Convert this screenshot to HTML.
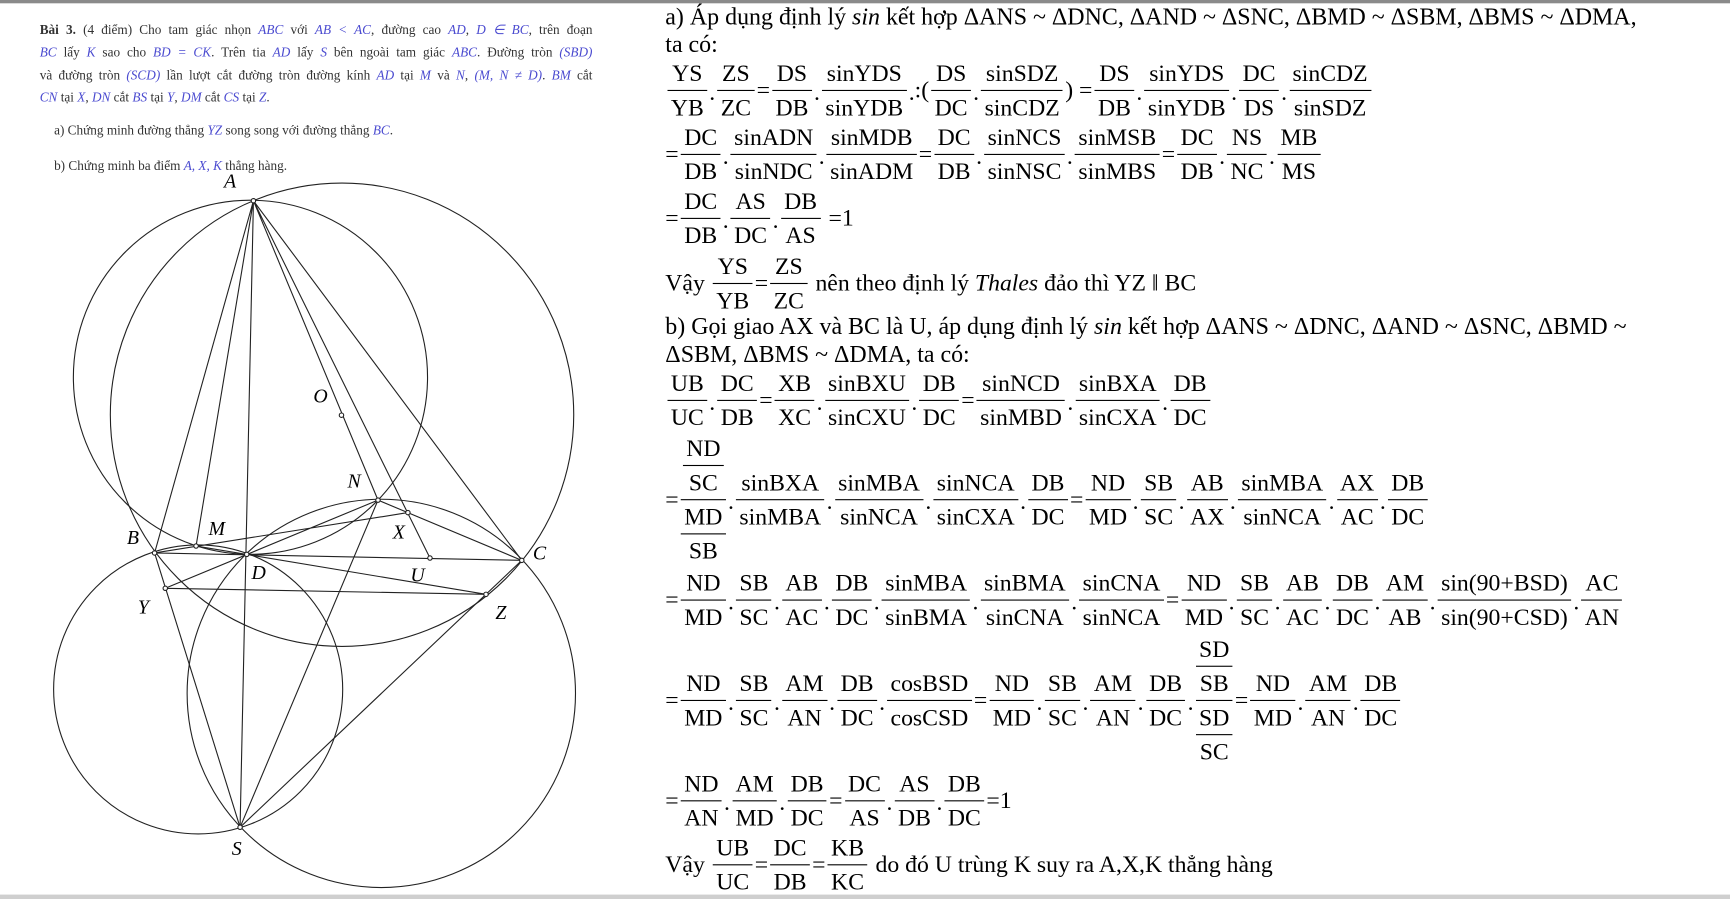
<!DOCTYPE html>
<html><head><meta charset="utf-8"><style>
html,body{margin:0;padding:0;background:#fff;overflow:hidden}
#w{position:absolute;left:0;top:0;width:1568px;height:815px;transform-origin:0 0;transform:scale(1.10332,1.10307);font-family:"Liberation Serif",serif;color:#000}
.tl{position:absolute;left:603px;font-size:21.7px;line-height:24px;white-space:nowrap}
.r{position:absolute;left:603px;display:flex;align-items:center;transform:translateY(-50%);font-size:21.5px;white-space:nowrap}
.f{display:inline-flex;flex-direction:column;text-align:center;margin:0 2px}
.f>span,.f>div{line-height:30px;padding:0 3px}
.f>*+*{border-top:1.5px solid #000}
.f>div{padding:0}
.d{padding:0 0 0 0;position:relative;top:2px}
.p{font-size:12px;color:#333;position:absolute;left:36px;width:501px;white-space:nowrap;line-height:14px}
.j{text-align:justify;text-align-last:justify;white-space:normal}
.m{color:#4b4bd0;font-style:italic}
.lab{position:absolute;font-style:italic;font-size:18px}
</style></head><body><div id="w">
<div style="position:absolute;left:0;top:0;width:1568px;height:3px;background:#8a8a8a"></div>
<div style="position:absolute;left:0;top:811px;width:1568px;height:4px;background:#cfcfcf"></div>

<div class="p j" style="top:20px"><b>Bài 3.</b> (4 điểm) Cho tam giác nhọn <span class="m">ABC</span> với <span class="m">AB &lt; AC</span>, đường cao <span class="m">AD</span>, <span class="m">D ∈ BC</span>, trên đoạn</div>
<div class="p j" style="top:40px"><span class="m">BC</span> lấy <span class="m">K</span> sao cho <span class="m">BD = CK</span>. Trên tia <span class="m">AD</span> lấy <span class="m">S</span> bên ngoài tam giác <span class="m">ABC</span>. Đường tròn <span class="m">(SBD)</span></div>
<div class="p j" style="top:61px">và đường tròn <span class="m">(SCD)</span> lần lượt cắt đường tròn đường kính <span class="m">AD</span> tại <span class="m">M</span> và <span class="m">N</span>, <span class="m">(M, N ≠ D)</span>. <span class="m">BM</span> cắt</div>
<div class="p" style="top:81px"><span class="m">CN</span> tại <span class="m">X</span>, <span class="m">DN</span> cắt <span class="m">BS</span> tại <span class="m">Y</span>, <span class="m">DM</span> cắt <span class="m">CS</span> tại <span class="m">Z</span>.</div>
<div class="p" style="top:111px;left:49px">a) Chứng minh đường thẳng <span class="m">YZ</span> song song với đường thẳng <span class="m">BC</span>.</div>
<div class="p" style="top:143px;left:49px">b) Chứng minh ba điểm <span class="m">A, X, K</span> thẳng hàng.</div>

<svg style="position:absolute;left:0;top:0" width="600" height="815" fill="none" stroke="#222" stroke-width="1">
<circle cx="227" cy="342" r="160.5"/>
<circle cx="310" cy="376" r="210"/>
<circle cx="179.6" cy="625" r="131"/>
<circle cx="345.6" cy="628.6" r="176"/>
<path d="M229.7 182L140.1 501.3M229.7 182L177.7 495M229.7 182L217.6 750M229.7 182L342.6 453.4M229.7 182L389.7 505.9M229.7 182L472.9 508M140.1 501.3L472.9 508M140.1 501.3L369.7 464.7M472.9 508L342.6 453.4M342.6 453.4L149.8 533.3M342.6 453.4L217.6 750M140.1 501.3L217.6 750M472.9 508L217.6 750M177.7 495L440.5 538.8M149.8 533.3L440.5 538.8"/>
<g fill="#fff">
<circle cx="229.7" cy="182" r="2"/><circle cx="140.1" cy="501.3" r="2"/><circle cx="472.9" cy="508" r="2"/><circle cx="223.6" cy="502.6" r="2"/><circle cx="177.7" cy="495" r="2"/><circle cx="342.6" cy="453.4" r="2"/><circle cx="369.7" cy="464.7" r="2"/><circle cx="389.7" cy="505.9" r="2"/><circle cx="309.5" cy="376.4" r="2"/><circle cx="149.8" cy="533.3" r="2"/><circle cx="440.5" cy="538.8" r="2"/><circle cx="217.6" cy="750" r="2"/>
</g></svg>
<div class="lab" style="left:203px;top:154px">A</div>
<div class="lab" style="left:284px;top:349px">O</div>
<div class="lab" style="left:315px;top:426px">N</div>
<div class="lab" style="left:189px;top:469px">M</div>
<div class="lab" style="left:115px;top:477px">B</div>
<div class="lab" style="left:356px;top:472px">X</div>
<div class="lab" style="left:483px;top:491px">C</div>
<div class="lab" style="left:228px;top:509px">D</div>
<div class="lab" style="left:372px;top:511px">U</div>
<div class="lab" style="left:125px;top:540px">Y</div>
<div class="lab" style="left:449px;top:545px">Z</div>
<div class="lab" style="left:210px;top:759px">S</div>

<div class="tl" style="top:3px">a) Áp dụng định lý <i>sin</i> kết hợp ΔANS ~ ΔDNC, ΔAND ~ ΔSNC, ΔBMD ~ ΔSBM, ΔBMS ~ ΔDMA,</div>
<div class="tl" style="top:28px">ta có:</div>

<div class="r" style="top:82px"><span class="f"><span>YS</span><span>YB</span></span><span class="d">.</span><span class="f"><span>ZS</span><span>ZC</span></span>=<span class="f"><span>DS</span><span>DB</span></span><span class="d">.</span><span class="f"><span>sinYDS</span><span>sinYDB</span></span><span class="d">.</span>:(<span class="f"><span>DS</span><span>DC</span></span><span class="d">.</span><span class="f"><span>sinSDZ</span><span>sinCDZ</span></span>)&nbsp;=<span class="f"><span>DS</span><span>DB</span></span><span class="d">.</span><span class="f"><span>sinYDS</span><span>sinYDB</span></span><span class="d">.</span><span class="f"><span>DC</span><span>DS</span></span><span class="d">.</span><span class="f"><span>sinCDZ</span><span>sinSDZ</span></span></div>

<div class="r" style="top:140px">=<span class="f"><span>DC</span><span>DB</span></span><span class="d">.</span><span class="f"><span>sinADN</span><span>sinNDC</span></span><span class="d">.</span><span class="f"><span>sinMDB</span><span>sinADM</span></span>=<span class="f"><span>DC</span><span>DB</span></span><span class="d">.</span><span class="f"><span>sinNCS</span><span>sinNSC</span></span><span class="d">.</span><span class="f"><span>sinMSB</span><span>sinMBS</span></span>=<span class="f"><span>DC</span><span>DB</span></span><span class="d">.</span><span class="f"><span>NS</span><span>NC</span></span><span class="d">.</span><span class="f"><span>MB</span><span>MS</span></span></div>

<div class="r" style="top:198px">=<span class="f"><span>DC</span><span>DB</span></span><span class="d">.</span><span class="f"><span>AS</span><span>DC</span></span><span class="d">.</span><span class="f"><span>DB</span><span>AS</span></span>&nbsp;=1</div>

<div class="r" style="top:257px">Vậy&nbsp;<span class="f"><span>YS</span><span>YB</span></span>=<span class="f"><span>ZS</span><span>ZC</span></span>&nbsp;nên theo định lý&nbsp;<i>Thales</i>&nbsp;đảo thì YZ ‖ BC</div>

<div class="tl" style="top:284px">b) Gọi giao AX và BC là U, áp dụng định lý <i>sin</i> kết hợp ΔANS ~ ΔDNC, ΔAND ~ ΔSNC, ΔBMD ~</div>
<div class="tl" style="top:309px">ΔSBM, ΔBMS ~ ΔDMA, ta có:</div>

<div class="r" style="top:363px"><span class="f"><span>UB</span><span>UC</span></span><span class="d">.</span><span class="f"><span>DC</span><span>DB</span></span>=<span class="f"><span>XB</span><span>XC</span></span><span class="d">.</span><span class="f"><span>sinBXU</span><span>sinCXU</span></span><span class="d">.</span><span class="f"><span>DB</span><span>DC</span></span>=<span class="f"><span>sinNCD</span><span>sinMBD</span></span><span class="d">.</span><span class="f"><span>sinBXA</span><span>sinCXA</span></span><span class="d">.</span><span class="f"><span>DB</span><span>DC</span></span></div>

<div class="r" style="top:453px">=<span class="f"><div><span class="f" style="margin:0"><span>ND</span><span>SC</span></span></div><div><span class="f" style="margin:0"><span>MD</span><span>SB</span></span></div></span><span class="d">.</span><span class="f"><span>sinBXA</span><span>sinMBA</span></span><span class="d">.</span><span class="f"><span>sinMBA</span><span>sinNCA</span></span><span class="d">.</span><span class="f"><span>sinNCA</span><span>sinCXA</span></span><span class="d">.</span><span class="f"><span>DB</span><span>DC</span></span>=<span class="f"><span>ND</span><span>MD</span></span><span class="d">.</span><span class="f"><span>SB</span><span>SC</span></span><span class="d">.</span><span class="f"><span>AB</span><span>AX</span></span><span class="d">.</span><span class="f"><span>sinMBA</span><span>sinNCA</span></span><span class="d">.</span><span class="f"><span>AX</span><span>AC</span></span><span class="d">.</span><span class="f"><span>DB</span><span>DC</span></span></div>

<div class="r" style="top:544px">=<span class="f"><span>ND</span><span>MD</span></span><span class="d">.</span><span class="f"><span>SB</span><span>SC</span></span><span class="d">.</span><span class="f"><span>AB</span><span>AC</span></span><span class="d">.</span><span class="f"><span>DB</span><span>DC</span></span><span class="d">.</span><span class="f"><span>sinMBA</span><span>sinBMA</span></span><span class="d">.</span><span class="f"><span>sinBMA</span><span>sinCNA</span></span><span class="d">.</span><span class="f"><span>sinCNA</span><span>sinNCA</span></span>=<span class="f"><span>ND</span><span>MD</span></span><span class="d">.</span><span class="f"><span>SB</span><span>SC</span></span><span class="d">.</span><span class="f"><span>AB</span><span>AC</span></span><span class="d">.</span><span class="f"><span>DB</span><span>DC</span></span><span class="d">.</span><span class="f"><span>AM</span><span>AB</span></span><span class="d">.</span><span class="f"><span>sin(90+BSD)</span><span>sin(90+CSD)</span></span><span class="d">.</span><span class="f"><span>AC</span><span>AN</span></span></div>

<div class="r" style="top:635px">=<span class="f"><span>ND</span><span>MD</span></span><span class="d">.</span><span class="f"><span>SB</span><span>SC</span></span><span class="d">.</span><span class="f"><span>AM</span><span>AN</span></span><span class="d">.</span><span class="f"><span>DB</span><span>DC</span></span><span class="d">.</span><span class="f"><span>cosBSD</span><span>cosCSD</span></span>=<span class="f"><span>ND</span><span>MD</span></span><span class="d">.</span><span class="f"><span>SB</span><span>SC</span></span><span class="d">.</span><span class="f"><span>AM</span><span>AN</span></span><span class="d">.</span><span class="f"><span>DB</span><span>DC</span></span><span class="d">.</span><span class="f"><div><span class="f" style="margin:0"><span>SD</span><span>SB</span></span></div><div><span class="f" style="margin:0"><span>SD</span><span>SC</span></span></div></span>=<span class="f"><span>ND</span><span>MD</span></span><span class="d">.</span><span class="f"><span>AM</span><span>AN</span></span><span class="d">.</span><span class="f"><span>DB</span><span>DC</span></span></div>

<div class="r" style="top:726px">=<span class="f"><span>ND</span><span>AN</span></span><span class="d">.</span><span class="f"><span>AM</span><span>MD</span></span><span class="d">.</span><span class="f"><span>DB</span><span>DC</span></span>=<span class="f"><span>DC</span><span>AS</span></span><span class="d">.</span><span class="f"><span>AS</span><span>DB</span></span><span class="d">.</span><span class="f"><span>DB</span><span>DC</span></span>=1</div>

<div class="r" style="top:784px">Vậy&nbsp;<span class="f"><span>UB</span><span>UC</span></span>=<span class="f"><span>DC</span><span>DB</span></span>=<span class="f"><span>KB</span><span>KC</span></span>&nbsp;do đó U trùng K suy ra A,X,K thẳng hàng</div>
</div></body></html>
